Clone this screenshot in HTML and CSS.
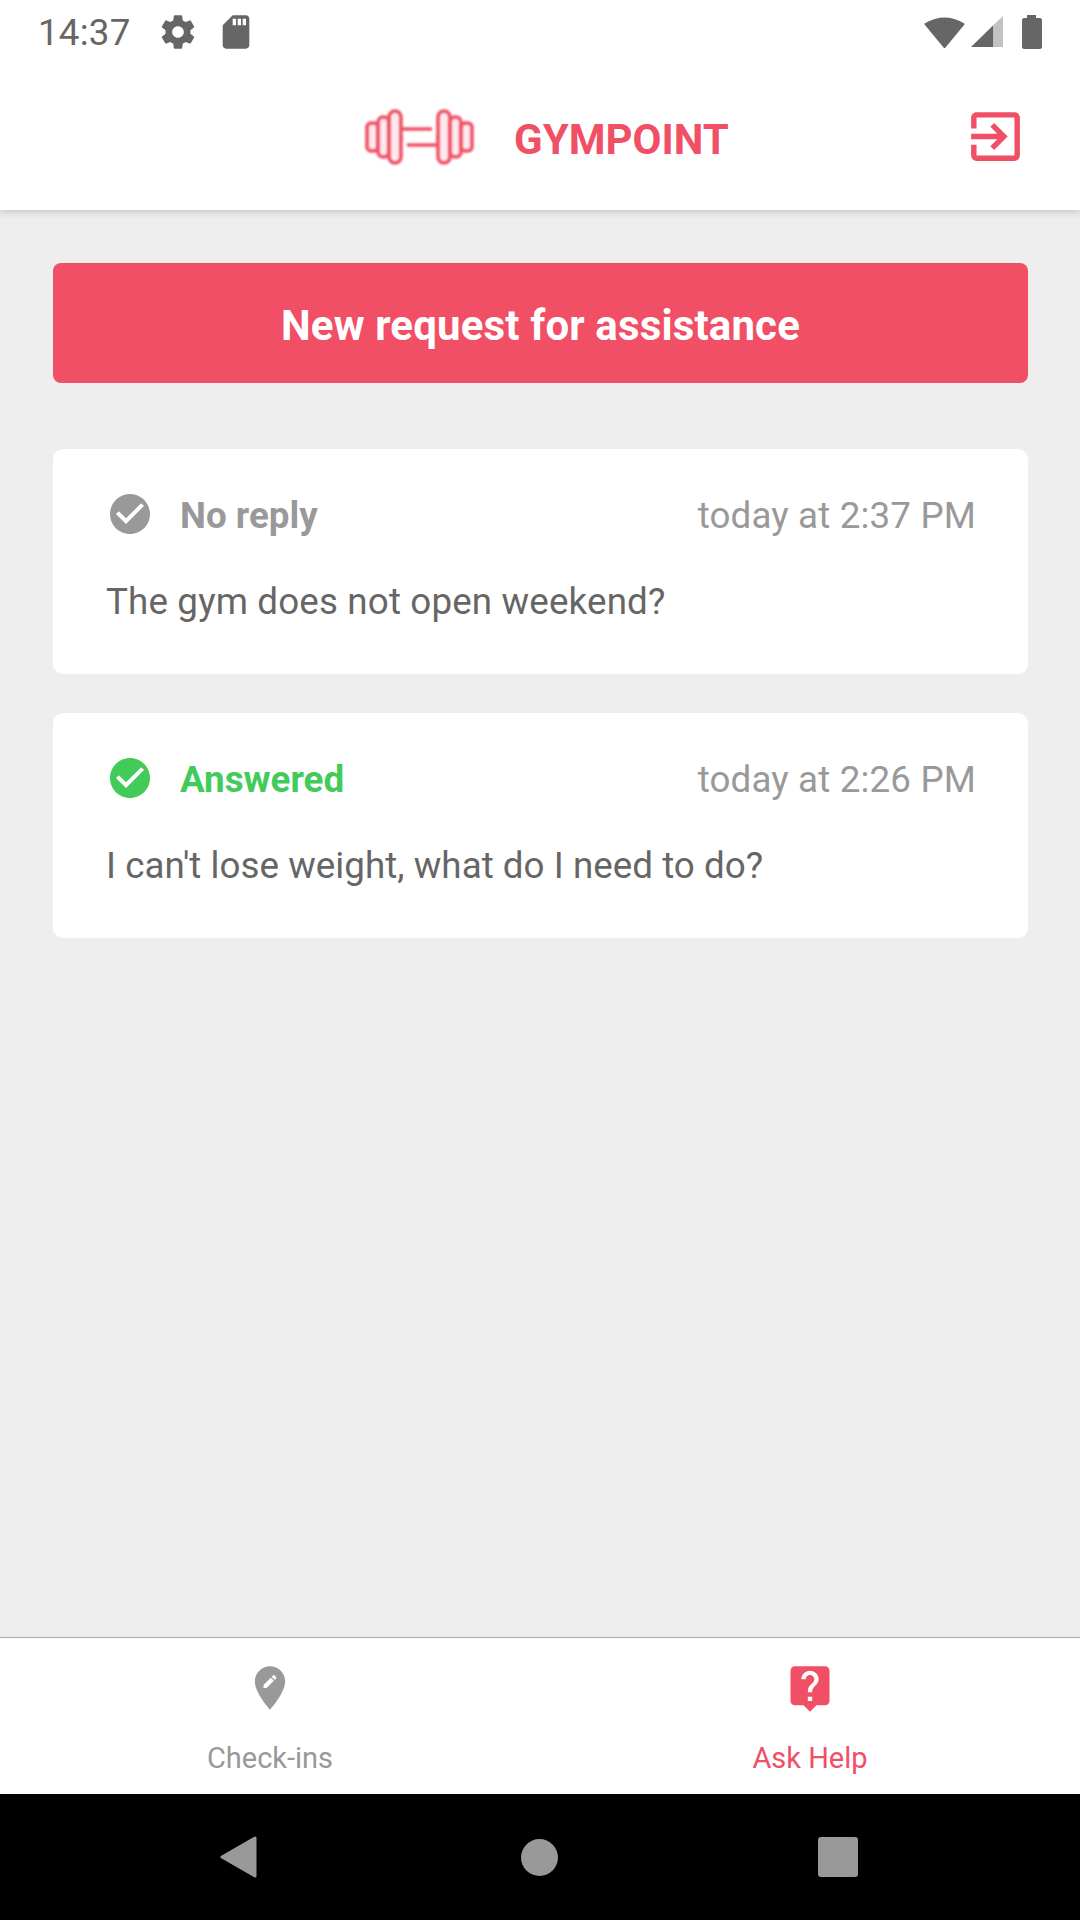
FILE: index.html
```html
<!DOCTYPE html>
<html lang="en">
<head>
  <meta charset="UTF-8">
  <title>Gympoint - Ask Help</title>
  <link rel="stylesheet" href="styles.css">
</head>
<body>
  <div class="top">
    <div class="status-bar">
      <span class="clock">14:37</span>
      <svg class="status-icon gear" viewBox="0 0 24 24"><path d="M19.43 12.98c.04-.32.07-.64.07-.98s-.03-.66-.07-.98l2.11-1.65c.19-.15.24-.42.12-.64l-2-3.46c-.12-.22-.39-.3-.61-.22l-2.49 1c-.52-.4-1.08-.73-1.69-.98l-.38-2.65C14.46 2.18 14.25 2 14 2h-4c-.25 0-.46.18-.49.42l-.38 2.65c-.61.25-1.17.59-1.69.98l-2.49-1c-.23-.09-.49 0-.61.22l-2 3.46c-.13.22-.07.49.12.64l2.11 1.65c-.04.32-.07.65-.07.98s.03.66.07.98l-2.11 1.65c-.19.15-.24.42-.12.64l2 3.46c.12.22.39.3.61.22l2.49-1c.52.4 1.08.73 1.69.98l.38 2.65c.03.24.24.42.49.42h4c.25 0 .46-.18.49-.42l.38-2.65c.61-.25 1.17-.59 1.69-.98l2.49 1c.23.09.49 0 .61-.22l2-3.46c.12-.22.07-.49-.12-.64l-2.11-1.65zM12 15.5c-1.93 0-3.5-1.57-3.5-3.5s1.57-3.5 3.5-3.5 3.5 1.57 3.5 3.5-1.57 3.5-3.5 3.5z"/></svg>
      <svg class="status-icon sd" viewBox="0 0 24 24"><path d="M18 2h-8L4.02 8 4 20c0 1.1.9 2 2 2h12c1.1 0 2-.9 2-2V4c0-1.1-.9-2-2-2zm-6 6h-2V4h2v4zm3 0h-2V4h2v4zm3 0h-2V4h2v4z"/></svg>
      <span class="status-right">
        <svg class="wifi" viewBox="0 0 41 32"><path d="M1.5 8Q20.5-3 39.5 8L20.5 31Z" stroke="#666" stroke-width="2" stroke-linejoin="round"/></svg>
        <svg class="signal" viewBox="0 0 32 31"><path d="M0 31L22.5 9V31Z"/><path d="M22.5 9L32 0V31H22.5Z" fill="#c2c2c2"/></svg>
        <svg class="battery" viewBox="0 0 20 34"><path d="M5 3V0h9v3h4c1 0 2 1 2 2v27c0 1-1 2-2 2H2c-1 0-2-1-2-2V5c0-1 1-2 2-2z"/></svg>
      </span>
    </div>

    <header class="app-header">
      <div class="brand">
        <svg class="logo" viewBox="0 0 109 56" fill="none" stroke="#f04f65" stroke-width="3.5">
          <rect x="2" y="14" width="11" height="28" rx="4" fill="#fde9ec"/>
          <rect x="13" y="8" width="11" height="40" rx="5" fill="#fde9ec"/>
          <rect x="24" y="2" width="12" height="52" rx="6" fill="#fde9ec"/>
          <rect x="73" y="2" width="12" height="52" rx="6" fill="#fde9ec"/>
          <rect x="85" y="8" width="11" height="40" rx="5" fill="#fde9ec"/>
          <rect x="96" y="14" width="11" height="28" rx="4" fill="#fde9ec"/>
          <path d="M37 20H67M42 36H72"/>
          <path d="M35 29h3M71 29h3" stroke-dasharray="3 1"/>
        </svg>
        <span class="brand-name">GYMPOINT</span>
      </div>
      <svg class="logout" viewBox="0 0 24 24"><path d="M10.09 15.59L11.5 17l5-5-5-5-1.41 1.41L12.67 11H3v2h9.67l-2.58 2.59zM19 3H5c-1.11 0-2 .9-2 2v4h2V5h14v14H5v-4H3v4c0 1.1.89 2 2 2h14c1.1 0 2-.9 2-2V5c0-1.1-.9-2-2-2z"/></svg>
    </header>
  </div>

  <main class="content">
    <button class="new-request">New request for assistance</button>

    <div class="card">
      <div class="card-head">
        <svg class="check" viewBox="0 0 24 24"><path d="M12 2C6.48 2 2 6.48 2 12s4.48 10 10 10 10-4.48 10-10S17.52 2 12 2zm-2 15l-5-5 1.41-1.41L10 14.17l7.59-7.59L19 8l-9 9z"/></svg>
        <span class="state">No reply</span>
        <span class="date">today at 2:37 PM</span>
      </div>
      <p class="question">The gym does not open weekend?</p>
    </div>

    <div class="card answered">
      <div class="card-head">
        <svg class="check" viewBox="0 0 24 24"><path d="M12 2C6.48 2 2 6.48 2 12s4.48 10 10 10 10-4.48 10-10S17.52 2 12 2zm-2 15l-5-5 1.41-1.41L10 14.17l7.59-7.59L19 8l-9 9z"/></svg>
        <span class="state">Answered</span>
        <span class="date">today at 2:26 PM</span>
      </div>
      <p class="question">I can't lose weight, what do I need to do?</p>
    </div>
  </main>

  <nav class="tabs">
    <div class="tab">
      <svg class="tab-icon" viewBox="0 0 24 24"><path d="M12 2C8.14 2 5 5.14 5 9c0 5.25 7 13 7 13s7-7.75 7-13c0-3.86-3.14-7-7-7zm-1.56 10H9v-1.44l3.35-3.34 1.43 1.43L10.44 12zm4.45-4.45l-.7.7-1.44-1.44.7-.7c.15-.15.39-.15.54 0l.9.9c.15.15.15.39 0 .54z"/></svg>
      <span>Check-ins</span>
    </div>
    <div class="tab active">
      <svg class="tab-icon" viewBox="0 0 24 24"><path d="M19 2H5c-1.11 0-2 .9-2 2v14c0 1.1.89 2 2 2h4l3 3 3-3h4c1.1 0 2-.9 2-2V4c0-1.1-.9-2-2-2zm-6 16h-2v-2h2v2zm2.07-7.75l-.9.92C13.45 11.9 13 12.5 13 14h-2v-.5c0-1.1.45-2.1 1.17-2.83l1.24-1.26c.37-.36.59-.86.59-1.41 0-1.1-.9-2-2-2s-2 .9-2 2H8c0-2.21 1.79-4 4-4s4 1.79 4 4c0 .88-.36 1.68-.93 2.25z"/></svg>
      <span>Ask Help</span>
    </div>
  </nav>

  <div class="system-nav">
    <svg class="sys-back" viewBox="0 0 37 42"><path d="M35 2V40L2 21Z" stroke="#999" stroke-width="3" stroke-linejoin="round"/></svg>
    <span class="sys-home"></span>
    <span class="sys-recent"></span>
  </div>
</body>
</html>
```

FILE: styles.css
```css
* {
  box-sizing: border-box;
}

body {
  margin: 0;
  width: 1080px;
  height: 1920px;
  display: flex;
  flex-direction: column;
  font-family: Roboto, sans-serif;
  background: #eeeeee;
  color: #666666;
}

svg {
  display: block;
  flex: none;
}

.top {
  background: white;
  box-shadow: 0 2px 8px rgba(0, 0, 0, 0.18);
}

/* status bar */
.status-bar {
  height: 63px;
  display: flex;
  align-items: center;
  padding: 0 38px;
}

.status-bar svg {
  fill: #666666;
}

.clock {
  font-size: 36.75px;
  width: 120px;
  padding-top: 2px;
  letter-spacing: 0.2px;
}

.status-icon {
  width: 40px;
  height: 40px;
}

.sd {
  margin-left: 18px;
}

.status-right {
  margin-left: auto;
  display: flex;
  align-items: center;
}

.wifi {
  width: 41px;
  height: 32px;
}

.signal {
  width: 32px;
  height: 31px;
  margin-left: 6px;
}

.battery {
  width: 20px;
  height: 34px;
  margin-left: 19px;
}

/* header */
.app-header {
  height: 147px;
  display: flex;
  align-items: center;
  justify-content: space-between;
  padding: 0 52px 0 365px;
}

.brand {
  display: flex;
  align-items: center;
  gap: 40px;
}

.logo {
  width: 109px;
  height: 56px;
  filter: blur(0.8px);
}

.brand-name {
  padding-top: 5px;
  font-size: 42px;
  font-weight: 700;
  color: #f04f65;
}

.logout {
  width: 65px;
  height: 65px;
  fill: #f04f65;
}

/* content */
.content {
  flex: 1;
  padding: 53px 52px 0 53px;
  display: flex;
  flex-direction: column;
  gap: 39px;
}

.new-request {
  height: 120px;
  margin-bottom: 27px;
  padding-top: 6px;
  background: #f04f65;
  color: white;
  border: none;
  border-radius: 8px;
  font-family: Roboto, sans-serif;
  font-size: 42px;
  font-weight: 700;
  letter-spacing: 0.15px;
}

.card {
  height: 225px;
  background: white;
  border-radius: 10px;
  padding: 41px 52px 0 53px;
}

.card-head {
  height: 48px;
  display: flex;
  align-items: center;
}

.check {
  width: 48px;
  height: 48px;
  margin-right: 26px;
  fill: #999999;
}

.state {
  padding-top: 2px;
  font-size: 36.75px;
  font-weight: 700;
  color: #999999;
}

.date {
  margin-left: auto;
  padding-top: 2px;
  font-size: 36.75px;
  letter-spacing: 0.15px;
  color: #999999;
}

.answered .check {
  fill: #42cb59;
}

.answered .state {
  color: #42cb59;
}

.question {
  margin: 41px 0 0;
  font-size: 36.75px;
  line-height: 46px;
  letter-spacing: 0.15px;
}

.answered .question {
  letter-spacing: 0.03px;
}

/* bottom tabs */
.tabs {
  height: 157px;
  background: white;
  border-top: 1px solid #a8a8a8;
  display: flex;
}

.tab {
  flex: 1;
  display: flex;
  flex-direction: column;
  align-items: center;
  padding-top: 24px;
  color: #999999;
  fill: #999999;
  font-size: 29px;
}

.tab-icon {
  width: 52px;
  height: 52px;
  margin-bottom: 27px;
}

.tab.active {
  color: #f04f65;
  fill: #f04f65;
}

/* android nav */
.system-nav {
  height: 126px;
  background: black;
  display: flex;
  align-items: center;
  padding-left: 220px;
}

.sys-back {
  width: 37px;
  height: 42px;
  fill: #999999;
}

.sys-home {
  width: 37px;
  height: 37px;
  margin-left: 264px;
  border-radius: 50%;
  background: #999999;
}

.sys-recent {
  width: 40px;
  height: 40px;
  margin-left: 260px;
  border-radius: 3px;
  background: #999999;
}
```
